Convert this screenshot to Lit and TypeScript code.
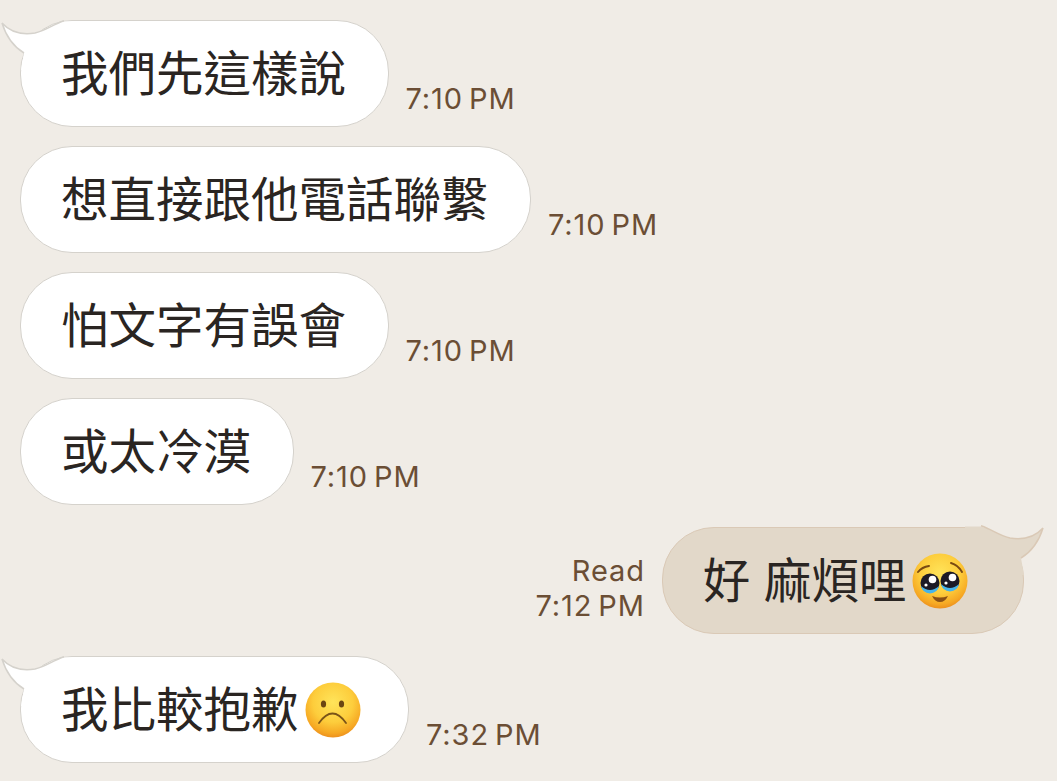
import { LitElement, html, css, svg } from 'lit';
import { customElement } from 'lit/decorators.js';

type Msg = {
  text: string;
  time: string;
  out?: boolean;
  tail?: boolean;
  read?: boolean;
  emoji?: 'plead' | 'frown';
  apart?: boolean;
};

const MESSAGES: Msg[] = [
  { text: '我們先這樣說', time: '7:10 PM', tail: true },
  { text: '想直接跟他電話聯繫', time: '7:10 PM' },
  { text: '怕文字有誤會', time: '7:10 PM' },
  { text: '或太冷漠', time: '7:10 PM' },
  { text: '好 麻煩哩', time: '7:12 PM', out: true, tail: true, read: true, emoji: 'plead', apart: true },
  { text: '我比較抱歉', time: '7:32 PM', tail: true, emoji: 'frown', apart: true },
];

const defs = svg`
  <defs>
    <radialGradient id="face" cx="50%" cy="36%" r="66%">
      <stop offset="0" stop-color="#ffe45a"/>
      <stop offset="0.55" stop-color="#fdcd3c"/>
      <stop offset="0.85" stop-color="#f6a823"/>
      <stop offset="1" stop-color="#ea8a1c"/>
    </radialGradient>
  </defs>`;

const plead = html`<svg class="emoji" viewBox="0 0 56 56">
  ${defs}
  <circle cx="28" cy="28" r="27.5" fill="url(#face)"/>
  <path d="M6 19 Q10 14 17 13" fill="none" stroke="#7a4a12" stroke-width="2" stroke-linecap="round"/>
  <path d="M39 10 Q46 12 50 19" fill="none" stroke="#7a4a12" stroke-width="2" stroke-linecap="round"/>
  <circle cx="18" cy="30" r="9.500" fill="#1c1a26"/>
  <circle cx="38" cy="28" r="9.500" fill="#1c1a26"/>
  <path d="M9 33 Q18 41 27 33 Q25.500 40 18 40.500 Q10.500 40 9 33Z" fill="#46b4ea"/>
  <path d="M29 31 Q38 39 47 31 Q45.500 38 38 38.500 Q30.500 38 29 31Z" fill="#46b4ea"/>
  <circle cx="20.500" cy="26.500" r="3.800" fill="#fff"/>
  <circle cx="40.500" cy="24.500" r="3.800" fill="#fff"/>
  <circle cx="14" cy="32" r="1.600" fill="#fff"/>
  <circle cx="34" cy="30" r="1.600" fill="#fff"/>
  <path d="M20 43 Q28 46 36 43 Q33 49 28 49 Q23 49 20 43Z" fill="#8a5014"/>
</svg>`;

const frown = html`<svg class="emoji" viewBox="0 0 56 56">
  ${defs}
  <circle cx="28" cy="28" r="27.500" fill="url(#face)"/>
  <ellipse cx="18.500" cy="22" rx="2.600" ry="3.600" fill="#6b4512"/>
  <ellipse cx="36.500" cy="22" rx="2.600" ry="3.600" fill="#6b4512"/>
  <path d="M14 41 Q27.500 22 41 41" fill="none" stroke="#7a5418" stroke-width="1.800" stroke-linecap="round"/>
</svg>`;

// drawn in page coordinates of the first bubble (its top edge at y=20)
const tailSvg = html`<svg class="tail" viewBox="0 0 80 70">
  <path class="tail-fill" d="M2 23 C10 32 22 35 35 33 C45 31 52 25 64 21.500 H80 V70 H21 L24 53 C14 47 6 36 2 23Z"/>
  <path class="tail-line" d="M64 20.800 C52 25 45 31 35 33 C22 35 10 32 2 23 C6 36 14 47 24 53"/>
</svg>`;

@customElement('app-root')
export class AppRoot extends LitElement {
  static styles = css`
    :host {
      display: block;
      height: 781px;
      overflow: hidden;
      background: #f0ece6;
    }
    .list {
      display: flex;
      flex-direction: column;
      gap: 19px;
      padding: 20px 33px 0 20px;
    }
    .row {
      display: flex;
      align-items: flex-end;
      gap: 17px;
    }
    .row.out {
      justify-content: flex-end;
    }
    .row.apart {
      margin-top: 3px;
    }
    .bubble {
      --bg: #fff;
      --line: #d5d2cc;
      position: relative;
      box-sizing: border-box;
      display: flex;
      align-items: center;
      height: 107px;
      padding: 0 41.500px 6px 40px;
      border: 1.500px solid var(--line);
      border-radius: 52px;
      background: var(--bg);
      color: #2a2522;
      font-family: 'Noto Sans CJK TC', 'Noto Sans', sans-serif;
      font-size: 47.500px;
      line-height: 1;
      white-space: pre;
    }
    .out .bubble {
      --bg: #e2d8c9;
      --line: #dac9b6;
      padding-left: 40px;
      padding-right: 55.500px;
      word-spacing: 3px;
    }
    .label {
      position: relative;
    }
    .tail {
      position: absolute;
      left: -21.500px;
      top: -21.500px;
      width: 80px;
      height: 70px;
      overflow: visible;
    }
    .out .tail {
      left: auto;
      right: -21.500px;
      top: -23.500px;
      transform: scaleX(-1);
    }
    .tail-fill {
      fill: var(--bg);
    }
    .tail-line {
      fill: none;
      stroke: var(--line);
      stroke-width: 1.500;
    }
    .emoji {
      position: relative;
      flex: none;
      width: 56px;
      height: 56px;
      margin: 6px 6px 0 6px;
    }
    .out .emoji {
      margin-left: 5px;
      margin-right: 0;
    }
    .time {
      padding-bottom: 11px;
      color: #6b4e35;
      font-family: Inter, 'Liberation Sans', sans-serif;
      font-size: 29px;
      line-height: 35px;
      letter-spacing: 0.900px;
      word-spacing: -3px;
      text-align: right;
      white-space: nowrap;
    }
  `;

  private renderBubble(m: Msg) {
    return html`<div class="bubble">
      ${m.tail ? tailSvg : ''}<span class="label">${m.text}</span>${m.emoji === 'plead' ? plead : m.emoji === 'frown' ? frown : ''}
    </div>`;
  }

  render() {
    return html`<div class="list">
      ${MESSAGES.map((m) => {
        const time = html`<div class="time">${m.read ? html`Read<br />` : ''}${m.time}</div>`;
        return html`<div class="row ${m.out ? 'out' : ''} ${m.apart ? 'apart' : ''}">
          ${m.out ? html`${time}${this.renderBubble(m)}` : html`${this.renderBubble(m)}${time}`}
        </div>`;
      })}
    </div>`;
  }
}
